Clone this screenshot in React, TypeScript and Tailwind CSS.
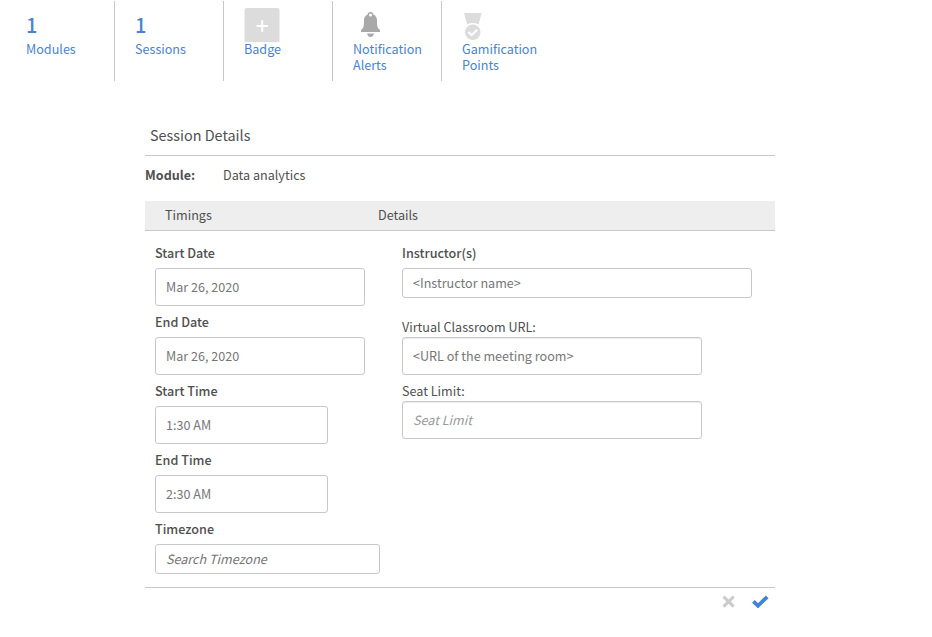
import type { ReactNode } from 'react';

function Tab({ children, label, last }: { children: ReactNode; label: string; last?: boolean }) {
  return (
    <button
      type="button"
      className={`flex h-20 flex-col items-start pl-5 text-left text-[#4a83cd] ${
        last ? 'w-[110px]' : 'w-[109px] border-r border-[#c8c8c8]'
      }`}
    >
      <span className="flex h-10 w-full shrink-0 items-start">{children}</span>
      <span className="text-[12.6px] leading-4">{label}</span>
    </button>
  );
}

function Field({
  label,
  value,
  placeholder,
  box,
  labelStyle,
}: {
  label: string;
  value?: string;
  placeholder?: string;
  box: string;
  labelStyle: string;
}) {
  return (
    <label className="flex flex-col items-start">
      <span className={labelStyle}>{label}</span>
      <input
        type="text"
        defaultValue={value}
        placeholder={placeholder}
        className={`rounded-[3px] border border-[#c8c8c8] bg-white px-2.5 pb-0.5 text-[12.6px] text-[#767676] outline-none placeholder:italic ${box}`}
      />
    </label>
  );
}

const strong = 'h-[31px] pt-2 text-[12.6px] leading-4 font-medium text-[#4f4f4f]';
const plain = 'h-[26px] pt-2 text-[12.6px] leading-4 text-[#4f4f4f]';

export default function App() {
  return (
    <div className="h-[637px] w-[932px] overflow-hidden bg-white pt-px font-['Noto_Sans_CJK_SC','Open_Sans',sans-serif] text-[12.6px] text-[#4f4f4f]">
      <nav className="ml-1.5 flex">
        <Tab label="Modules">
          <span className="pt-3 text-xl leading-6 font-medium">1</span>
        </Tab>
        <Tab label="Sessions">
          <span className="pt-3 text-xl leading-6 font-medium">1</span>
        </Tab>
        <Tab label="Badge">
          <svg className="mt-[7px]" width="36" height="34" viewBox="0 0 36 34">
            <path d="M2.5 0H33.5Q35.5 0 35.5 2V34H0.5V2Q0.5 0 2.5 0Z" fill="#dcdcdc" />
            <path d="M12.5 18H24M18.2 12.2V23.8" stroke="#fff" strokeWidth="2" />
          </svg>
        </Tab>
        <Tab label="Notification Alerts">
          <svg className="mt-[10px] ml-2" width="20" height="27" viewBox="0 0 20 27">
            <path
              fillRule="evenodd"
              d="M9.5 1C11.3 1 12.3 2 12.4 3.5C15 4.6 16 6.8 16 9.5C16 15 16.4 17.2 19 19V21H0V19C2.6 17.2 3 15 3 9.5C3 6.8 4 4.6 6.6 3.5C6.7 2 7.7 1 9.5 1ZM9.5 2.5A1.5 1.5 0 1 0 9.5 5.5A1.5 1.5 0 0 0 9.5 2.5Z"
              fill="#a9a9a9"
            />
            <path d="M6 22.5H13Q12 26 9.5 26T6 22.5Z" fill="#a9a9a9" />
          </svg>
        </Tab>
        <Tab label="Gamification Points" last>
          <svg className="mt-[11px] ml-[2px]" width="19" height="29" viewBox="0 0 19 29">
            <path d="M0 1H17.5L14.6 12.5Q8.8 9.7 3.1 12.5Z" fill="#dcdcdc" />
            <circle cx="8.7" cy="20.3" r="7.8" fill="#dcdcdc" />
            <path d="M4.4 20L7.6 23.2L13.2 17.7" fill="none" stroke="#fff" strokeWidth="2" />
          </svg>
        </Tab>
      </nav>

      <main className="mt-[35px] ml-[145px] flex w-[630px] flex-col">
        <h1 className="h-10 border-b border-[#c8c8c8] pt-[9px] pl-[5px] text-[14.4px] leading-5 font-normal">
          Session Details
        </h1>
        <div className="flex h-[45px] pt-[11px] leading-4">
          <span className="w-[78px] font-bold">Module:</span>
          <span>Data analytics</span>
        </div>
        <div className="flex h-[30px] items-center border-b border-[#c8c8c8] bg-[#eee] pb-px pl-5 leading-4">
          <span className="w-[213px]">Timings</span>
          <span>Details</span>
        </div>
        <div className="flex h-[357px] border-b border-[#c8c8c8] pt-1.5 pl-2.5">
          <section className="w-[247px]">
            <Field label="Start Date" value="Mar 26, 2020" box="h-[38px] w-[210px]" labelStyle={strong} />
            <Field label="End Date" value="Mar 26, 2020" box="h-[38px] w-[210px]" labelStyle={strong} />
            <Field label="Start Time" value="1:30 AM" box="h-[38px] w-[173px]" labelStyle={strong} />
            <Field label="End Time" value="2:30 AM" box="h-[38px] w-[173px]" labelStyle={strong} />
            <Field label="Timezone" placeholder="Search Timezone" box="h-[30px] w-[225px] placeholder:text-[#747474]" labelStyle={strong} />
          </section>
          <section>
            <Field label="Instructor(s)" value="<Instructor name>" box="h-[30px] w-[350px]" labelStyle={strong} />
            <div className="mt-[13px]">
              <Field
                label="Virtual Classroom URL:"
                value="<URL of the meeting room>"
                box="h-[38px] w-[300px] shadow-[inset_0_1px_1px_rgba(0,0,0,0.075)]"
                labelStyle={plain}
              />
              <Field
                label="Seat Limit:"
                placeholder="Seat Limit"
                box="h-[38px] w-[300px] shadow-[inset_0_1px_1px_rgba(0,0,0,0.075)] placeholder:text-[#999]"
                labelStyle={plain}
              />
            </div>
          </section>
        </div>
        <div className="flex justify-end gap-[17px] pt-[7px] pr-1.5">
          <button type="button" aria-label="Cancel">
            <svg width="13" height="13" viewBox="0 0 13 13">
              <path d="M1.5 1.6L11.7 11.6M11.7 1.6L1.5 11.6" stroke="#cbcbcb" strokeWidth="3" />
            </svg>
          </button>
          <button type="button" aria-label="Save">
            <svg width="17" height="13" viewBox="0 0 17 13">
              <path d="M1.4 6.4L6 10.8L15.2 1.8" fill="none" stroke="#4084d4" strokeWidth="3.8" />
            </svg>
          </button>
        </div>
      </main>
    </div>
  );
}
